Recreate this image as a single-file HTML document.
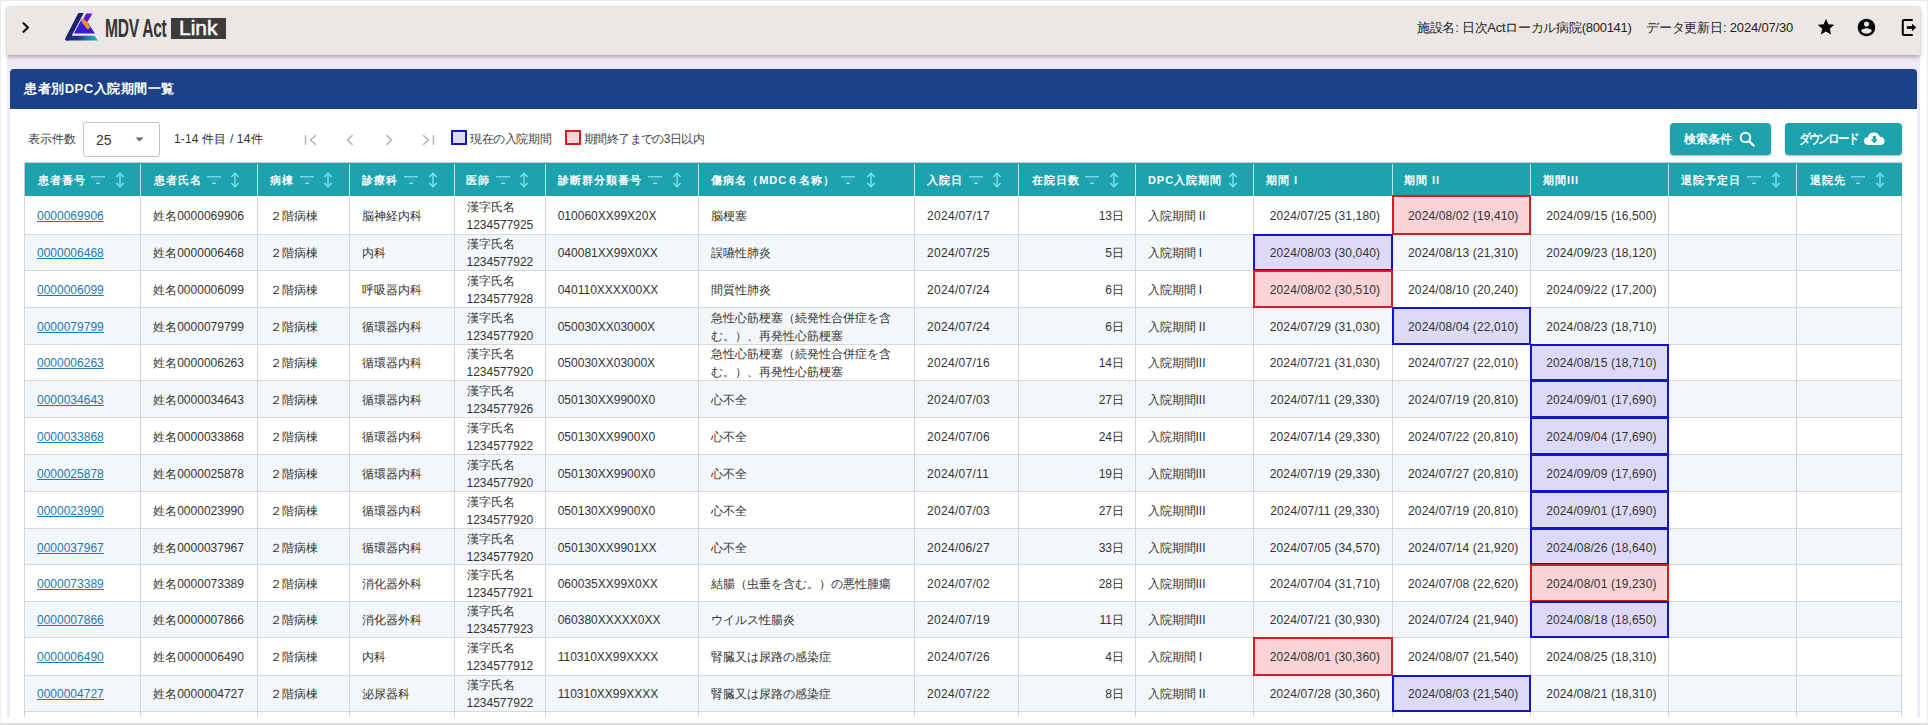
<!DOCTYPE html>
<html lang="ja"><head><meta charset="utf-8"><title>患者別DPC入院期間一覧</title>
<style>
html,body{margin:0;padding:0;}
body{width:1928px;height:725px;position:relative;overflow:hidden;background:#fff;font-family:'Liberation Sans', sans-serif;color:#333;}
.a{position:absolute;}
.t{position:absolute;white-space:nowrap;font-size:12px;line-height:18px;}
.hl{position:absolute;background:#d5d9de;}
.hd{position:absolute;color:#fff;font-weight:bold;font-size:11px;letter-spacing:1px;line-height:18px;white-space:nowrap;}
</style></head><body>

<div class="a" style="left:0;top:0;width:1928px;height:725px;box-sizing:border-box;border:1px solid #ececec;border-bottom:2px solid #dedede;"></div>
<div class="a" style="left:7px;top:6px;width:1913px;height:711px;background:#efeaf6;"></div>
<div class="a" style="left:7px;top:6px;width:1913px;height:49px;background:#ebe7e4;box-shadow:0 2px 4px rgba(0,0,0,0.3);"></div>
<svg class="a" style="left:18px;top:18px" width="16" height="18" viewBox="0 0 16 18"><path d="M5.5 5.2 L10 9.5 L5.5 13.8" fill="none" stroke="#111" stroke-width="2.2" stroke-linecap="round" stroke-linejoin="round"/></svg>
<svg class="a" style="left:60px;top:8px" width="44" height="36" viewBox="0 0 44 36">
<defs><linearGradient id="g1" gradientUnits="userSpaceOnUse" x1="5" y1="0" x2="38" y2="0"><stop offset="0" stop-color="#1d2570"/><stop offset="0.4" stop-color="#23338a"/><stop offset="1" stop-color="#22c3c6"/></linearGradient></defs>
<path d="M18.2 5.6 Q18.6 5 19.3 5 L23.6 5 L11.5 27.8 L34.8 27.8 L37.9 32.4 L6.8 32.4 Q4.6 32.4 5.4 30.6 Z" fill="url(#g1)"/>
<path d="M18.2 5.6 Q18.6 5 19.3 5 L23.6 5 L11.5 27.8 L9 32.4 L6.8 32.4 Q4.6 32.4 5.4 30.6 Z" fill="#1d2570"/>
<path d="M14 25.4 L21.6 11.2 L28.5 15.5 L34.9 25.4 Z" fill="#3c1bd8"/>
<path d="M26.2 5.5 L32.5 5.5 L27 14.5 L22.5 12.2 Z" fill="#6214d0"/>
<path d="M21 12.9 L24.1 10.7 L30.6 19.3 L27.5 21.5 Z" fill="#f0912a"/>
</svg>
<div class="a" style="left:105px;top:13px;font-family:'Liberation Sans', sans-serif;font-weight:bold;font-size:26px;line-height:30px;color:#3a3434;transform:scaleX(0.6);transform-origin:0 0;letter-spacing:-0.5px;">MDV Act</div>
<div class="a" style="left:171px;top:18px;width:55px;height:21px;background:#403b3b;"></div>
<div class="a" style="left:179px;top:15.5px;font-weight:normal;-webkit-text-stroke:0.5px #fff;font-size:21px;line-height:24px;color:#fff;transform:scaleX(1);transform-origin:0 0;">Link</div>
<div class="a" style="left:1417px;top:18px;font-size:13px;letter-spacing:-0.27px;line-height:20px;color:#222;white-space:nowrap;">施設名: 日次Actローカル病院(800141)</div>
<div class="a" style="left:1646px;top:18px;font-size:13px;letter-spacing:-0.18px;line-height:20px;color:#222;white-space:nowrap;">データ更新日: 2024/07/30</div>
<svg class="a" style="left:1816px;top:17px" width="20" height="20" viewBox="0 0 24 24"><path d="M12 17.27L18.18 21l-1.64-7.03L22 9.24l-7.19-.61L12 2 9.19 8.63 2 9.24l5.46 4.73L5.82 21z" fill="#0a0a0a"/></svg>
<svg class="a" style="left:1856px;top:17px" width="21" height="21" viewBox="0 0 24 24"><path fill-rule="evenodd" d="M12 2C6.48 2 2 6.48 2 12s4.48 10 10 10 10-4.48 10-10S17.52 2 12 2zm0 3c1.66 0 3 1.34 3 3s-1.34 3-3 3-3-1.34-3-3 1.34-3 3-3zm0 14.2c-2.5 0-4.71-1.28-6-3.22.03-1.99 4-3.08 6-3.08 1.99 0 5.97 1.09 6 3.08-1.29 1.94-3.5 3.22-6 3.22z" fill="#0a0a0a"/></svg>
<svg class="a" style="left:1900px;top:17px" width="18" height="20" viewBox="0 0 18 20"><path d="M12 3 H4 Q2.8 3 2.8 4.2 V16.8 Q2.8 18 4 18 H12" fill="none" stroke="#0a0a0a" stroke-width="2.1" stroke-linecap="round"/><path d="M6.8 10.5 H12.5" stroke="#0a0a0a" stroke-width="2.8"/><path d="M12 6.8 L16.3 10.5 L12 14.2 Z" fill="#0a0a0a"/></svg>
<div class="a" style="left:10px;top:68.5px;width:1907px;height:40.5px;background:#1d4189;border-radius:4px 4px 0 0;"></div>
<div class="a" style="left:24px;top:78.5px;font-size:13px;letter-spacing:0.55px;line-height:20px;font-weight:bold;color:#fff;white-space:nowrap;">患者別DPC入院期間一覧</div>
<div class="a" style="left:10px;top:109px;width:1907px;height:608px;background:#fff;"></div>
<div class="a" style="left:28px;top:130px;font-size:12px;line-height:18px;color:#444;white-space:nowrap;">表示件数</div>
<div class="a" style="left:83px;top:122px;width:77px;height:35px;box-sizing:border-box;border:1px solid #c4c4c4;border-radius:3px;"></div>
<div class="a" style="left:96px;top:130px;font-size:14px;line-height:20px;color:#333;">25</div>
<svg class="a" style="left:135px;top:137px" width="9" height="5" viewBox="0 0 9 5"><path d="M0.5 0.5 L8.5 0.5 L4.5 4.5 Z" fill="#666"/></svg>
<div class="a" style="left:174px;top:130px;font-size:12px;letter-spacing:0.15px;line-height:18px;color:#333;white-space:nowrap;">1-14 件目 / 14件</div>
<svg class="a" style="left:303px;top:133px" width="16" height="14" viewBox="0 0 16 14"><path d="M2.5 2 V12" stroke="#b8b8b8" stroke-width="1.6"/><path d="M13 2.2 L7.5 7 L13 11.8" fill="none" stroke="#b8b8b8" stroke-width="1.6"/></svg>
<svg class="a" style="left:344px;top:133px" width="12" height="14" viewBox="0 0 12 14"><path d="M8.5 2.2 L3.5 7 L8.5 11.8" fill="none" stroke="#b8b8b8" stroke-width="1.6"/></svg>
<svg class="a" style="left:383px;top:133px" width="12" height="14" viewBox="0 0 12 14"><path d="M3.5 2.2 L8.5 7 L3.5 11.8" fill="none" stroke="#b8b8b8" stroke-width="1.6"/></svg>
<svg class="a" style="left:420px;top:133px" width="16" height="14" viewBox="0 0 16 14"><path d="M3 2.2 L8.5 7 L3 11.8" fill="none" stroke="#b8b8b8" stroke-width="1.6"/><path d="M13.5 2 V12" stroke="#b8b8b8" stroke-width="1.6"/></svg>
<div class="a" style="left:451px;top:130px;width:16px;height:15px;box-sizing:border-box;border:2px solid #1414c8;background:#dcdaf8;"></div>
<div class="a" style="left:470px;top:129.5px;font-size:12px;letter-spacing:-0.4px;line-height:18px;color:#444;white-space:nowrap;">現在の入院期間</div>
<div class="a" style="left:565px;top:130px;width:16px;height:15px;box-sizing:border-box;border:2px solid #d81c24;background:#f9d3d5;"></div>
<div class="a" style="left:584px;top:129.5px;font-size:12px;letter-spacing:-0.6px;line-height:18px;color:#444;white-space:nowrap;">期間終了までの3日以内</div>
<div class="a" style="left:1670px;top:123px;width:101px;height:32px;background:#1ca3ae;border-radius:4px;box-shadow:0 1px 2px rgba(0,0,0,0.3);"></div>
<div class="a" style="left:1684px;top:130px;font-size:12px;line-height:18px;font-weight:bold;color:#fff;white-space:nowrap;">検索条件</div>
<svg class="a" style="left:1739px;top:131px" width="17" height="16" viewBox="0 0 17 16"><circle cx="6.5" cy="6.5" r="4.8" fill="none" stroke="#fff" stroke-width="2"/><path d="M10 10 L14.5 14.5" stroke="#fff" stroke-width="2.4" stroke-linecap="round"/></svg>
<div class="a" style="left:1785px;top:123px;width:117px;height:32px;background:#1ca3ae;border-radius:4px;box-shadow:0 1px 2px rgba(0,0,0,0.3);"></div>
<div class="a" style="left:1799px;top:130px;font-size:12.5px;line-height:18px;font-weight:bold;color:#fff;white-space:nowrap;letter-spacing:-2px;transform:scaleX(0.886);transform-origin:0 0;">ダウンロード</div>
<svg class="a" style="left:1863px;top:131px" width="23" height="16" viewBox="0 0 23 16"><path d="M5.5 14 Q1 14 1 10 Q1 6.5 4.8 6.2 Q5.8 1.5 10.8 1.5 Q15.5 1.5 16.8 5.8 Q21.5 6 21.5 10 Q21.5 14 17.5 14 Z" fill="#fff"/><path d="M9.8 5 H12.8 V8.5 H15 L11.3 12.2 L7.6 8.5 H9.8 Z" fill="#1ca3ae"/></svg>
<div class="a" style="left:24.5px;top:162px;width:1877.0px;height:1px;background:#d0d0d0;"></div>
<div class="a" style="left:24.5px;top:163px;width:1877.0px;height:32.6px;background:#1ca3ae;"></div>
<div class="a" style="left:24.5px;top:234.3px;width:1877.0px;height:36.1px;background:#f3f7fa;"></div>
<div class="a" style="left:24.5px;top:307.5px;width:1877.0px;height:37.0px;background:#f3f7fa;"></div>
<div class="a" style="left:24.5px;top:380.4px;width:1877.0px;height:37.0px;background:#f3f7fa;"></div>
<div class="a" style="left:24.5px;top:454.2px;width:1877.0px;height:36.9px;background:#f3f7fa;"></div>
<div class="a" style="left:24.5px;top:528.6px;width:1877.0px;height:35.7px;background:#f3f7fa;"></div>
<div class="a" style="left:24.5px;top:601.5px;width:1877.0px;height:35.7px;background:#f3f7fa;"></div>
<div class="a" style="left:24.5px;top:675.4px;width:1877.0px;height:35.7px;background:#f3f7fa;"></div>
<div class="hl" style="left:24.5px;top:233.8px;width:1877.0px;height:1px;"></div>
<div class="hl" style="left:24.5px;top:269.9px;width:1877.0px;height:1px;"></div>
<div class="hl" style="left:24.5px;top:307.0px;width:1877.0px;height:1px;"></div>
<div class="hl" style="left:24.5px;top:344.0px;width:1877.0px;height:1px;"></div>
<div class="hl" style="left:24.5px;top:379.9px;width:1877.0px;height:1px;"></div>
<div class="hl" style="left:24.5px;top:416.9px;width:1877.0px;height:1px;"></div>
<div class="hl" style="left:24.5px;top:453.7px;width:1877.0px;height:1px;"></div>
<div class="hl" style="left:24.5px;top:490.6px;width:1877.0px;height:1px;"></div>
<div class="hl" style="left:24.5px;top:528.1px;width:1877.0px;height:1px;"></div>
<div class="hl" style="left:24.5px;top:563.8px;width:1877.0px;height:1px;"></div>
<div class="hl" style="left:24.5px;top:601.0px;width:1877.0px;height:1px;"></div>
<div class="hl" style="left:24.5px;top:636.7px;width:1877.0px;height:1px;"></div>
<div class="hl" style="left:24.5px;top:674.9px;width:1877.0px;height:1px;"></div>
<div class="hl" style="left:24.5px;top:710.6px;width:1877.0px;height:1px;"></div>
<div class="a" style="left:24.0px;top:195.6px;width:1px;height:521px;background:#d3d6db;"></div>
<div class="a" style="left:140.2px;top:163.5px;width:1px;height:32px;background:#bfe6ea;"></div>
<div class="a" style="left:140.2px;top:195.6px;width:1px;height:521px;background:#d3d6db;"></div>
<div class="a" style="left:256.8px;top:163.5px;width:1px;height:32px;background:#bfe6ea;"></div>
<div class="a" style="left:256.8px;top:195.6px;width:1px;height:521px;background:#d3d6db;"></div>
<div class="a" style="left:349.2px;top:163.5px;width:1px;height:32px;background:#bfe6ea;"></div>
<div class="a" style="left:349.2px;top:195.6px;width:1px;height:521px;background:#d3d6db;"></div>
<div class="a" style="left:453.5px;top:163.5px;width:1px;height:32px;background:#bfe6ea;"></div>
<div class="a" style="left:453.5px;top:195.6px;width:1px;height:521px;background:#d3d6db;"></div>
<div class="a" style="left:544.7px;top:163.5px;width:1px;height:32px;background:#bfe6ea;"></div>
<div class="a" style="left:544.7px;top:195.6px;width:1px;height:521px;background:#d3d6db;"></div>
<div class="a" style="left:698.2px;top:163.5px;width:1px;height:32px;background:#bfe6ea;"></div>
<div class="a" style="left:698.2px;top:195.6px;width:1px;height:521px;background:#d3d6db;"></div>
<div class="a" style="left:914.0px;top:163.5px;width:1px;height:32px;background:#bfe6ea;"></div>
<div class="a" style="left:914.0px;top:195.6px;width:1px;height:521px;background:#d3d6db;"></div>
<div class="a" style="left:1018.2px;top:163.5px;width:1px;height:32px;background:#bfe6ea;"></div>
<div class="a" style="left:1018.2px;top:195.6px;width:1px;height:521px;background:#d3d6db;"></div>
<div class="a" style="left:1134.5px;top:163.5px;width:1px;height:32px;background:#bfe6ea;"></div>
<div class="a" style="left:1134.5px;top:195.6px;width:1px;height:521px;background:#d3d6db;"></div>
<div class="a" style="left:1252.9px;top:163.5px;width:1px;height:32px;background:#bfe6ea;"></div>
<div class="a" style="left:1252.9px;top:195.6px;width:1px;height:521px;background:#d3d6db;"></div>
<div class="a" style="left:1392.0px;top:163.5px;width:1px;height:32px;background:#bfe6ea;"></div>
<div class="a" style="left:1392.0px;top:195.6px;width:1px;height:521px;background:#d3d6db;"></div>
<div class="a" style="left:1529.5px;top:163.5px;width:1px;height:32px;background:#bfe6ea;"></div>
<div class="a" style="left:1529.5px;top:195.6px;width:1px;height:521px;background:#d3d6db;"></div>
<div class="a" style="left:1668.3px;top:163.5px;width:1px;height:32px;background:#bfe6ea;"></div>
<div class="a" style="left:1668.3px;top:195.6px;width:1px;height:521px;background:#d3d6db;"></div>
<div class="a" style="left:1796.1px;top:163.5px;width:1px;height:32px;background:#bfe6ea;"></div>
<div class="a" style="left:1796.1px;top:195.6px;width:1px;height:521px;background:#d3d6db;"></div>
<div class="a" style="left:1901.0px;top:195.6px;width:1px;height:521px;background:#d3d6db;"></div>
<div class="a" style="left:24.0px;top:163px;width:1px;height:33px;background:#c9c9c9;"></div>
<div class="hd" style="left:37.5px;top:170.5px;">患者番号</div>
<svg class="a" style="left:91.3px;top:175px" width="14" height="10" viewBox="0 0 14 10"><path d="M0 1.8 H14" stroke="#7fe3ea" stroke-width="1.3"/><path d="M2.5 5 H11.5" stroke="#34b0b9" stroke-width="1.2"/><path d="M5 8.3 H9" stroke="#7fe3ea" stroke-width="1.5"/></svg>
<svg class="a" style="left:114.6px;top:172px" width="10" height="16" viewBox="0 0 10 16"><path d="M5 1.3 V14.7" stroke="#7fe3ea" stroke-width="1.4"/><path d="M1.3 5 L5 1.3 L8.7 5" fill="none" stroke="#7fe3ea" stroke-width="1.4"/><path d="M1.3 11 L5 14.7 L8.7 11" fill="none" stroke="#7fe3ea" stroke-width="1.4"/></svg>
<div class="hd" style="left:153.5px;top:170.5px;">患者氏名</div>
<svg class="a" style="left:206.5px;top:175px" width="14" height="10" viewBox="0 0 14 10"><path d="M0 1.8 H14" stroke="#7fe3ea" stroke-width="1.3"/><path d="M2.5 5 H11.5" stroke="#34b0b9" stroke-width="1.2"/><path d="M5 8.3 H9" stroke="#7fe3ea" stroke-width="1.5"/></svg>
<svg class="a" style="left:230.0px;top:172px" width="10" height="16" viewBox="0 0 10 16"><path d="M5 1.3 V14.7" stroke="#7fe3ea" stroke-width="1.4"/><path d="M1.3 5 L5 1.3 L8.7 5" fill="none" stroke="#7fe3ea" stroke-width="1.4"/><path d="M1.3 11 L5 14.7 L8.7 11" fill="none" stroke="#7fe3ea" stroke-width="1.4"/></svg>
<div class="hd" style="left:270.1px;top:170.5px;">病棟</div>
<svg class="a" style="left:299.8px;top:175px" width="14" height="10" viewBox="0 0 14 10"><path d="M0 1.8 H14" stroke="#7fe3ea" stroke-width="1.3"/><path d="M2.5 5 H11.5" stroke="#34b0b9" stroke-width="1.2"/><path d="M5 8.3 H9" stroke="#7fe3ea" stroke-width="1.5"/></svg>
<svg class="a" style="left:323.2px;top:172px" width="10" height="16" viewBox="0 0 10 16"><path d="M5 1.3 V14.7" stroke="#7fe3ea" stroke-width="1.4"/><path d="M1.3 5 L5 1.3 L8.7 5" fill="none" stroke="#7fe3ea" stroke-width="1.4"/><path d="M1.3 11 L5 14.7 L8.7 11" fill="none" stroke="#7fe3ea" stroke-width="1.4"/></svg>
<div class="hd" style="left:361.7px;top:170.5px;">診療科</div>
<svg class="a" style="left:403.5px;top:175px" width="14" height="10" viewBox="0 0 14 10"><path d="M0 1.8 H14" stroke="#7fe3ea" stroke-width="1.3"/><path d="M2.5 5 H11.5" stroke="#34b0b9" stroke-width="1.2"/><path d="M5 8.3 H9" stroke="#7fe3ea" stroke-width="1.5"/></svg>
<svg class="a" style="left:427.7px;top:172px" width="10" height="16" viewBox="0 0 10 16"><path d="M5 1.3 V14.7" stroke="#7fe3ea" stroke-width="1.4"/><path d="M1.3 5 L5 1.3 L8.7 5" fill="none" stroke="#7fe3ea" stroke-width="1.4"/><path d="M1.3 11 L5 14.7 L8.7 11" fill="none" stroke="#7fe3ea" stroke-width="1.4"/></svg>
<div class="hd" style="left:466.2px;top:170.5px;">医師</div>
<svg class="a" style="left:496.0px;top:175px" width="14" height="10" viewBox="0 0 14 10"><path d="M0 1.8 H14" stroke="#7fe3ea" stroke-width="1.3"/><path d="M2.5 5 H11.5" stroke="#34b0b9" stroke-width="1.2"/><path d="M5 8.3 H9" stroke="#7fe3ea" stroke-width="1.5"/></svg>
<svg class="a" style="left:519.3px;top:172px" width="10" height="16" viewBox="0 0 10 16"><path d="M5 1.3 V14.7" stroke="#7fe3ea" stroke-width="1.4"/><path d="M1.3 5 L5 1.3 L8.7 5" fill="none" stroke="#7fe3ea" stroke-width="1.4"/><path d="M1.3 11 L5 14.7 L8.7 11" fill="none" stroke="#7fe3ea" stroke-width="1.4"/></svg>
<div class="hd" style="left:557.6px;top:170.5px;">診断群分類番号</div>
<svg class="a" style="left:647.9px;top:175px" width="14" height="10" viewBox="0 0 14 10"><path d="M0 1.8 H14" stroke="#7fe3ea" stroke-width="1.3"/><path d="M2.5 5 H11.5" stroke="#34b0b9" stroke-width="1.2"/><path d="M5 8.3 H9" stroke="#7fe3ea" stroke-width="1.5"/></svg>
<svg class="a" style="left:671.7px;top:172px" width="10" height="16" viewBox="0 0 10 16"><path d="M5 1.3 V14.7" stroke="#7fe3ea" stroke-width="1.4"/><path d="M1.3 5 L5 1.3 L8.7 5" fill="none" stroke="#7fe3ea" stroke-width="1.4"/><path d="M1.3 11 L5 14.7 L8.7 11" fill="none" stroke="#7fe3ea" stroke-width="1.4"/></svg>
<div class="hd" style="left:711.2px;top:170.5px;">傷病名（MDC６名称）</div>
<svg class="a" style="left:840.8px;top:175px" width="14" height="10" viewBox="0 0 14 10"><path d="M0 1.8 H14" stroke="#7fe3ea" stroke-width="1.3"/><path d="M2.5 5 H11.5" stroke="#34b0b9" stroke-width="1.2"/><path d="M5 8.3 H9" stroke="#7fe3ea" stroke-width="1.5"/></svg>
<svg class="a" style="left:865.7px;top:172px" width="10" height="16" viewBox="0 0 10 16"><path d="M5 1.3 V14.7" stroke="#7fe3ea" stroke-width="1.4"/><path d="M1.3 5 L5 1.3 L8.7 5" fill="none" stroke="#7fe3ea" stroke-width="1.4"/><path d="M1.3 11 L5 14.7 L8.7 11" fill="none" stroke="#7fe3ea" stroke-width="1.4"/></svg>
<div class="hd" style="left:927.0px;top:170.5px;">入院日</div>
<svg class="a" style="left:968.5px;top:175px" width="14" height="10" viewBox="0 0 14 10"><path d="M0 1.8 H14" stroke="#7fe3ea" stroke-width="1.3"/><path d="M2.5 5 H11.5" stroke="#34b0b9" stroke-width="1.2"/><path d="M5 8.3 H9" stroke="#7fe3ea" stroke-width="1.5"/></svg>
<svg class="a" style="left:992.3px;top:172px" width="10" height="16" viewBox="0 0 10 16"><path d="M5 1.3 V14.7" stroke="#7fe3ea" stroke-width="1.4"/><path d="M1.3 5 L5 1.3 L8.7 5" fill="none" stroke="#7fe3ea" stroke-width="1.4"/><path d="M1.3 11 L5 14.7 L8.7 11" fill="none" stroke="#7fe3ea" stroke-width="1.4"/></svg>
<div class="hd" style="left:1031.7px;top:170.5px;">在院日数</div>
<svg class="a" style="left:1084.6px;top:175px" width="14" height="10" viewBox="0 0 14 10"><path d="M0 1.8 H14" stroke="#7fe3ea" stroke-width="1.3"/><path d="M2.5 5 H11.5" stroke="#34b0b9" stroke-width="1.2"/><path d="M5 8.3 H9" stroke="#7fe3ea" stroke-width="1.5"/></svg>
<svg class="a" style="left:1108.5px;top:172px" width="10" height="16" viewBox="0 0 10 16"><path d="M5 1.3 V14.7" stroke="#7fe3ea" stroke-width="1.4"/><path d="M1.3 5 L5 1.3 L8.7 5" fill="none" stroke="#7fe3ea" stroke-width="1.4"/><path d="M1.3 11 L5 14.7 L8.7 11" fill="none" stroke="#7fe3ea" stroke-width="1.4"/></svg>
<div class="hd" style="left:1147.9px;top:170.5px;">DPC入院期間</div>
<svg class="a" style="left:1227.8px;top:172px" width="10" height="16" viewBox="0 0 10 16"><path d="M5 1.3 V14.7" stroke="#7fe3ea" stroke-width="1.4"/><path d="M1.3 5 L5 1.3 L8.7 5" fill="none" stroke="#7fe3ea" stroke-width="1.4"/><path d="M1.3 11 L5 14.7 L8.7 11" fill="none" stroke="#7fe3ea" stroke-width="1.4"/></svg>
<div class="hd" style="left:1266.0px;top:170.5px;">期間 I</div>
<div class="hd" style="left:1403.9px;top:170.5px;">期間 II</div>
<div class="hd" style="left:1542.9px;top:170.5px;">期間III</div>
<div class="hd" style="left:1681.2px;top:170.5px;">退院予定日</div>
<svg class="a" style="left:1747.0px;top:175px" width="14" height="10" viewBox="0 0 14 10"><path d="M0 1.8 H14" stroke="#7fe3ea" stroke-width="1.3"/><path d="M2.5 5 H11.5" stroke="#34b0b9" stroke-width="1.2"/><path d="M5 8.3 H9" stroke="#7fe3ea" stroke-width="1.5"/></svg>
<svg class="a" style="left:1770.9px;top:172px" width="10" height="16" viewBox="0 0 10 16"><path d="M5 1.3 V14.7" stroke="#7fe3ea" stroke-width="1.4"/><path d="M1.3 5 L5 1.3 L8.7 5" fill="none" stroke="#7fe3ea" stroke-width="1.4"/><path d="M1.3 11 L5 14.7 L8.7 11" fill="none" stroke="#7fe3ea" stroke-width="1.4"/></svg>
<div class="hd" style="left:1810.0px;top:170.5px;">退院先</div>
<svg class="a" style="left:1851.0px;top:175px" width="14" height="10" viewBox="0 0 14 10"><path d="M0 1.8 H14" stroke="#7fe3ea" stroke-width="1.3"/><path d="M2.5 5 H11.5" stroke="#34b0b9" stroke-width="1.2"/><path d="M5 8.3 H9" stroke="#7fe3ea" stroke-width="1.5"/></svg>
<svg class="a" style="left:1874.9px;top:172px" width="10" height="16" viewBox="0 0 10 16"><path d="M5 1.3 V14.7" stroke="#7fe3ea" stroke-width="1.4"/><path d="M1.3 5 L5 1.3 L8.7 5" fill="none" stroke="#7fe3ea" stroke-width="1.4"/><path d="M1.3 11 L5 14.7 L8.7 11" fill="none" stroke="#7fe3ea" stroke-width="1.4"/></svg>
<div class="t" style="left:37.0px;top:206.9px;color:#2179b5;text-decoration:underline;">0000069906</div>
<div class="t" style="left:153.2px;top:206.9px;">姓名0000069906</div>
<div class="t" style="left:269.8px;top:206.9px;">２階病棟</div>
<div class="t" style="left:362.2px;top:206.9px;">脳神経内科</div>
<div class="t" style="left:466.5px;top:197.9px;">漢字氏名<br>1234577925</div>
<div class="t" style="left:557.7px;top:206.9px;">010060XX99X20X</div>
<div class="t" style="left:711.2px;top:206.9px;">脳梗塞</div>
<div class="t" style="left:927.0px;top:206.9px;letter-spacing:0.3px;">2024/07/17</div>
<div class="t" style="left:1018.7px;top:206.9px;width:105.3px;text-align:right;">13日</div>
<div class="t" style="left:1147.5px;top:206.9px;">入院期間 II</div>
<div class="t" style="left:1255.4px;top:206.9px;width:139.1px;text-align:center;letter-spacing:0.12px;">2024/07/25 (31,180)</div>
<div class="a" style="left:1392.0px;top:195.1px;width:138.5px;height:39.7px;box-sizing:border-box;border:2px solid #d81c24;background:#f9d3d5;"></div>
<div class="t" style="left:1394.5px;top:206.9px;width:137.5px;text-align:center;letter-spacing:0.12px;">2024/08/02 (19,410)</div>
<div class="t" style="left:1532.0px;top:206.9px;width:138.8px;text-align:center;letter-spacing:0.12px;">2024/09/15 (16,500)</div>
<div class="t" style="left:37.0px;top:244.3px;color:#2179b5;text-decoration:underline;">0000006468</div>
<div class="t" style="left:153.2px;top:244.3px;">姓名0000006468</div>
<div class="t" style="left:269.8px;top:244.3px;">２階病棟</div>
<div class="t" style="left:362.2px;top:244.3px;">内科</div>
<div class="t" style="left:466.5px;top:235.3px;">漢字氏名<br>1234577922</div>
<div class="t" style="left:557.7px;top:244.3px;">040081XX99X0XX</div>
<div class="t" style="left:711.2px;top:244.3px;">誤嚥性肺炎</div>
<div class="t" style="left:927.0px;top:244.3px;letter-spacing:0.3px;">2024/07/25</div>
<div class="t" style="left:1018.7px;top:244.3px;width:105.3px;text-align:right;">5日</div>
<div class="t" style="left:1147.5px;top:244.3px;">入院期間 I</div>
<div class="a" style="left:1252.9px;top:233.8px;width:140.1px;height:37.1px;box-sizing:border-box;border:2px solid #1414c8;background:#dcdaf8;"></div>
<div class="t" style="left:1255.4px;top:244.3px;width:139.1px;text-align:center;letter-spacing:0.12px;">2024/08/03 (30,040)</div>
<div class="t" style="left:1394.5px;top:244.3px;width:137.5px;text-align:center;letter-spacing:0.12px;">2024/08/13 (21,310)</div>
<div class="t" style="left:1532.0px;top:244.3px;width:138.8px;text-align:center;letter-spacing:0.12px;">2024/09/23 (18,120)</div>
<div class="t" style="left:37.0px;top:280.9px;color:#2179b5;text-decoration:underline;">0000006099</div>
<div class="t" style="left:153.2px;top:280.9px;">姓名0000006099</div>
<div class="t" style="left:269.8px;top:280.9px;">２階病棟</div>
<div class="t" style="left:362.2px;top:280.9px;">呼吸器内科</div>
<div class="t" style="left:466.5px;top:271.9px;">漢字氏名<br>1234577928</div>
<div class="t" style="left:557.7px;top:280.9px;">040110XXXX00XX</div>
<div class="t" style="left:711.2px;top:280.9px;">間質性肺炎</div>
<div class="t" style="left:927.0px;top:280.9px;letter-spacing:0.3px;">2024/07/24</div>
<div class="t" style="left:1018.7px;top:280.9px;width:105.3px;text-align:right;">6日</div>
<div class="t" style="left:1147.5px;top:280.9px;">入院期間 I</div>
<div class="a" style="left:1252.9px;top:269.9px;width:140.1px;height:38.1px;box-sizing:border-box;border:2px solid #d81c24;background:#f9d3d5;"></div>
<div class="t" style="left:1255.4px;top:280.9px;width:139.1px;text-align:center;letter-spacing:0.12px;">2024/08/02 (30,510)</div>
<div class="t" style="left:1394.5px;top:280.9px;width:137.5px;text-align:center;letter-spacing:0.12px;">2024/08/10 (20,240)</div>
<div class="t" style="left:1532.0px;top:280.9px;width:138.8px;text-align:center;letter-spacing:0.12px;">2024/09/22 (17,200)</div>
<div class="t" style="left:37.0px;top:318.0px;color:#2179b5;text-decoration:underline;">0000079799</div>
<div class="t" style="left:153.2px;top:318.0px;">姓名0000079799</div>
<div class="t" style="left:269.8px;top:318.0px;">２階病棟</div>
<div class="t" style="left:362.2px;top:318.0px;">循環器内科</div>
<div class="t" style="left:466.5px;top:309.0px;">漢字氏名<br>1234577920</div>
<div class="t" style="left:557.7px;top:318.0px;">050030XX03000X</div>
<div class="t" style="left:711.2px;top:309.0px;">急性心筋梗塞（続発性合併症を含<br>む。）、再発性心筋梗塞</div>
<div class="t" style="left:927.0px;top:318.0px;letter-spacing:0.3px;">2024/07/24</div>
<div class="t" style="left:1018.7px;top:318.0px;width:105.3px;text-align:right;">6日</div>
<div class="t" style="left:1147.5px;top:318.0px;">入院期間 II</div>
<div class="t" style="left:1255.4px;top:318.0px;width:139.1px;text-align:center;letter-spacing:0.12px;">2024/07/29 (31,030)</div>
<div class="a" style="left:1392.0px;top:307.0px;width:138.5px;height:38.0px;box-sizing:border-box;border:2px solid #1414c8;background:#dcdaf8;"></div>
<div class="t" style="left:1394.5px;top:318.0px;width:137.5px;text-align:center;letter-spacing:0.12px;">2024/08/04 (22,010)</div>
<div class="t" style="left:1532.0px;top:318.0px;width:138.8px;text-align:center;letter-spacing:0.12px;">2024/08/23 (18,710)</div>
<div class="t" style="left:37.0px;top:354.4px;color:#2179b5;text-decoration:underline;">0000006263</div>
<div class="t" style="left:153.2px;top:354.4px;">姓名0000006263</div>
<div class="t" style="left:269.8px;top:354.4px;">２階病棟</div>
<div class="t" style="left:362.2px;top:354.4px;">循環器内科</div>
<div class="t" style="left:466.5px;top:345.4px;">漢字氏名<br>1234577920</div>
<div class="t" style="left:557.7px;top:354.4px;">050030XX03000X</div>
<div class="t" style="left:711.2px;top:345.4px;">急性心筋梗塞（続発性合併症を含<br>む。）、再発性心筋梗塞</div>
<div class="t" style="left:927.0px;top:354.4px;letter-spacing:0.3px;">2024/07/16</div>
<div class="t" style="left:1018.7px;top:354.4px;width:105.3px;text-align:right;">14日</div>
<div class="t" style="left:1147.5px;top:354.4px;">入院期間III</div>
<div class="t" style="left:1255.4px;top:354.4px;width:139.1px;text-align:center;letter-spacing:0.12px;">2024/07/21 (31,030)</div>
<div class="t" style="left:1394.5px;top:354.4px;width:137.5px;text-align:center;letter-spacing:0.12px;">2024/07/27 (22,010)</div>
<div class="a" style="left:1529.5px;top:344.0px;width:139.8px;height:36.9px;box-sizing:border-box;border:2px solid #1414c8;background:#dcdaf8;"></div>
<div class="t" style="left:1532.0px;top:354.4px;width:138.8px;text-align:center;letter-spacing:0.12px;">2024/08/15 (18,710)</div>
<div class="t" style="left:37.0px;top:390.9px;color:#2179b5;text-decoration:underline;">0000034643</div>
<div class="t" style="left:153.2px;top:390.9px;">姓名0000034643</div>
<div class="t" style="left:269.8px;top:390.9px;">２階病棟</div>
<div class="t" style="left:362.2px;top:390.9px;">循環器内科</div>
<div class="t" style="left:466.5px;top:381.9px;">漢字氏名<br>1234577926</div>
<div class="t" style="left:557.7px;top:390.9px;">050130XX9900X0</div>
<div class="t" style="left:711.2px;top:390.9px;">心不全</div>
<div class="t" style="left:927.0px;top:390.9px;letter-spacing:0.3px;">2024/07/03</div>
<div class="t" style="left:1018.7px;top:390.9px;width:105.3px;text-align:right;">27日</div>
<div class="t" style="left:1147.5px;top:390.9px;">入院期間III</div>
<div class="t" style="left:1255.4px;top:390.9px;width:139.1px;text-align:center;letter-spacing:0.12px;">2024/07/11 (29,330)</div>
<div class="t" style="left:1394.5px;top:390.9px;width:137.5px;text-align:center;letter-spacing:0.12px;">2024/07/19 (20,810)</div>
<div class="a" style="left:1529.5px;top:379.9px;width:139.8px;height:38.0px;box-sizing:border-box;border:2px solid #1414c8;background:#dcdaf8;"></div>
<div class="t" style="left:1532.0px;top:390.9px;width:138.8px;text-align:center;letter-spacing:0.12px;">2024/09/01 (17,690)</div>
<div class="t" style="left:37.0px;top:427.8px;color:#2179b5;text-decoration:underline;">0000033868</div>
<div class="t" style="left:153.2px;top:427.8px;">姓名0000033868</div>
<div class="t" style="left:269.8px;top:427.8px;">２階病棟</div>
<div class="t" style="left:362.2px;top:427.8px;">循環器内科</div>
<div class="t" style="left:466.5px;top:418.8px;">漢字氏名<br>1234577922</div>
<div class="t" style="left:557.7px;top:427.8px;">050130XX9900X0</div>
<div class="t" style="left:711.2px;top:427.8px;">心不全</div>
<div class="t" style="left:927.0px;top:427.8px;letter-spacing:0.3px;">2024/07/06</div>
<div class="t" style="left:1018.7px;top:427.8px;width:105.3px;text-align:right;">24日</div>
<div class="t" style="left:1147.5px;top:427.8px;">入院期間III</div>
<div class="t" style="left:1255.4px;top:427.8px;width:139.1px;text-align:center;letter-spacing:0.12px;">2024/07/14 (29,330)</div>
<div class="t" style="left:1394.5px;top:427.8px;width:137.5px;text-align:center;letter-spacing:0.12px;">2024/07/22 (20,810)</div>
<div class="a" style="left:1529.5px;top:416.9px;width:139.8px;height:37.8px;box-sizing:border-box;border:2px solid #1414c8;background:#dcdaf8;"></div>
<div class="t" style="left:1532.0px;top:427.8px;width:138.8px;text-align:center;letter-spacing:0.12px;">2024/09/04 (17,690)</div>
<div class="t" style="left:37.0px;top:464.6px;color:#2179b5;text-decoration:underline;">0000025878</div>
<div class="t" style="left:153.2px;top:464.6px;">姓名0000025878</div>
<div class="t" style="left:269.8px;top:464.6px;">２階病棟</div>
<div class="t" style="left:362.2px;top:464.6px;">循環器内科</div>
<div class="t" style="left:466.5px;top:455.6px;">漢字氏名<br>1234577920</div>
<div class="t" style="left:557.7px;top:464.6px;">050130XX9900X0</div>
<div class="t" style="left:711.2px;top:464.6px;">心不全</div>
<div class="t" style="left:927.0px;top:464.6px;letter-spacing:0.3px;">2024/07/11</div>
<div class="t" style="left:1018.7px;top:464.6px;width:105.3px;text-align:right;">19日</div>
<div class="t" style="left:1147.5px;top:464.6px;">入院期間III</div>
<div class="t" style="left:1255.4px;top:464.6px;width:139.1px;text-align:center;letter-spacing:0.12px;">2024/07/19 (29,330)</div>
<div class="t" style="left:1394.5px;top:464.6px;width:137.5px;text-align:center;letter-spacing:0.12px;">2024/07/27 (20,810)</div>
<div class="a" style="left:1529.5px;top:453.7px;width:139.8px;height:37.9px;box-sizing:border-box;border:2px solid #1414c8;background:#dcdaf8;"></div>
<div class="t" style="left:1532.0px;top:464.6px;width:138.8px;text-align:center;letter-spacing:0.12px;">2024/09/09 (17,690)</div>
<div class="t" style="left:37.0px;top:501.9px;color:#2179b5;text-decoration:underline;">0000023990</div>
<div class="t" style="left:153.2px;top:501.9px;">姓名0000023990</div>
<div class="t" style="left:269.8px;top:501.9px;">２階病棟</div>
<div class="t" style="left:362.2px;top:501.9px;">循環器内科</div>
<div class="t" style="left:466.5px;top:492.9px;">漢字氏名<br>1234577920</div>
<div class="t" style="left:557.7px;top:501.9px;">050130XX9900X0</div>
<div class="t" style="left:711.2px;top:501.9px;">心不全</div>
<div class="t" style="left:927.0px;top:501.9px;letter-spacing:0.3px;">2024/07/03</div>
<div class="t" style="left:1018.7px;top:501.9px;width:105.3px;text-align:right;">27日</div>
<div class="t" style="left:1147.5px;top:501.9px;">入院期間III</div>
<div class="t" style="left:1255.4px;top:501.9px;width:139.1px;text-align:center;letter-spacing:0.12px;">2024/07/11 (29,330)</div>
<div class="t" style="left:1394.5px;top:501.9px;width:137.5px;text-align:center;letter-spacing:0.12px;">2024/07/19 (20,810)</div>
<div class="a" style="left:1529.5px;top:490.6px;width:139.8px;height:38.5px;box-sizing:border-box;border:2px solid #1414c8;background:#dcdaf8;"></div>
<div class="t" style="left:1532.0px;top:501.9px;width:138.8px;text-align:center;letter-spacing:0.12px;">2024/09/01 (17,690)</div>
<div class="t" style="left:37.0px;top:538.5px;color:#2179b5;text-decoration:underline;">0000037967</div>
<div class="t" style="left:153.2px;top:538.5px;">姓名0000037967</div>
<div class="t" style="left:269.8px;top:538.5px;">２階病棟</div>
<div class="t" style="left:362.2px;top:538.5px;">循環器内科</div>
<div class="t" style="left:466.5px;top:529.5px;">漢字氏名<br>1234577920</div>
<div class="t" style="left:557.7px;top:538.5px;">050130XX9901XX</div>
<div class="t" style="left:711.2px;top:538.5px;">心不全</div>
<div class="t" style="left:927.0px;top:538.5px;letter-spacing:0.3px;">2024/06/27</div>
<div class="t" style="left:1018.7px;top:538.5px;width:105.3px;text-align:right;">33日</div>
<div class="t" style="left:1147.5px;top:538.5px;">入院期間III</div>
<div class="t" style="left:1255.4px;top:538.5px;width:139.1px;text-align:center;letter-spacing:0.12px;">2024/07/05 (34,570)</div>
<div class="t" style="left:1394.5px;top:538.5px;width:137.5px;text-align:center;letter-spacing:0.12px;">2024/07/14 (21,920)</div>
<div class="a" style="left:1529.5px;top:528.1px;width:139.8px;height:36.7px;box-sizing:border-box;border:2px solid #1414c8;background:#dcdaf8;"></div>
<div class="t" style="left:1532.0px;top:538.5px;width:138.8px;text-align:center;letter-spacing:0.12px;">2024/08/26 (18,640)</div>
<div class="t" style="left:37.0px;top:574.9px;color:#2179b5;text-decoration:underline;">0000073389</div>
<div class="t" style="left:153.2px;top:574.9px;">姓名0000073389</div>
<div class="t" style="left:269.8px;top:574.9px;">２階病棟</div>
<div class="t" style="left:362.2px;top:574.9px;">消化器外科</div>
<div class="t" style="left:466.5px;top:565.9px;">漢字氏名<br>1234577921</div>
<div class="t" style="left:557.7px;top:574.9px;">060035XX99X0XX</div>
<div class="t" style="left:711.2px;top:574.9px;">結腸（虫垂を含む。）の悪性腫瘍</div>
<div class="t" style="left:927.0px;top:574.9px;letter-spacing:0.3px;">2024/07/02</div>
<div class="t" style="left:1018.7px;top:574.9px;width:105.3px;text-align:right;">28日</div>
<div class="t" style="left:1147.5px;top:574.9px;">入院期間III</div>
<div class="t" style="left:1255.4px;top:574.9px;width:139.1px;text-align:center;letter-spacing:0.12px;">2024/07/04 (31,710)</div>
<div class="t" style="left:1394.5px;top:574.9px;width:137.5px;text-align:center;letter-spacing:0.12px;">2024/07/08 (22,620)</div>
<div class="a" style="left:1529.5px;top:563.8px;width:139.8px;height:38.2px;box-sizing:border-box;border:2px solid #d81c24;background:#f9d3d5;"></div>
<div class="t" style="left:1532.0px;top:574.9px;width:138.8px;text-align:center;letter-spacing:0.12px;">2024/08/01 (19,230)</div>
<div class="t" style="left:37.0px;top:611.4px;color:#2179b5;text-decoration:underline;">0000007866</div>
<div class="t" style="left:153.2px;top:611.4px;">姓名0000007866</div>
<div class="t" style="left:269.8px;top:611.4px;">２階病棟</div>
<div class="t" style="left:362.2px;top:611.4px;">消化器外科</div>
<div class="t" style="left:466.5px;top:602.4px;">漢字氏名<br>1234577923</div>
<div class="t" style="left:557.7px;top:611.4px;">060380XXXXX0XX</div>
<div class="t" style="left:711.2px;top:611.4px;">ウイルス性腸炎</div>
<div class="t" style="left:927.0px;top:611.4px;letter-spacing:0.3px;">2024/07/19</div>
<div class="t" style="left:1018.7px;top:611.4px;width:105.3px;text-align:right;">11日</div>
<div class="t" style="left:1147.5px;top:611.4px;">入院期間III</div>
<div class="t" style="left:1255.4px;top:611.4px;width:139.1px;text-align:center;letter-spacing:0.12px;">2024/07/21 (30,930)</div>
<div class="t" style="left:1394.5px;top:611.4px;width:137.5px;text-align:center;letter-spacing:0.12px;">2024/07/24 (21,940)</div>
<div class="a" style="left:1529.5px;top:601.0px;width:139.8px;height:36.7px;box-sizing:border-box;border:2px solid #1414c8;background:#dcdaf8;"></div>
<div class="t" style="left:1532.0px;top:611.4px;width:138.8px;text-align:center;letter-spacing:0.12px;">2024/08/18 (18,650)</div>
<div class="t" style="left:37.0px;top:648.3px;color:#2179b5;text-decoration:underline;">0000006490</div>
<div class="t" style="left:153.2px;top:648.3px;">姓名0000006490</div>
<div class="t" style="left:269.8px;top:648.3px;">２階病棟</div>
<div class="t" style="left:362.2px;top:648.3px;">内科</div>
<div class="t" style="left:466.5px;top:639.3px;">漢字氏名<br>1234577912</div>
<div class="t" style="left:557.7px;top:648.3px;">110310XX99XXXX</div>
<div class="t" style="left:711.2px;top:648.3px;">腎臓又は尿路の感染症</div>
<div class="t" style="left:927.0px;top:648.3px;letter-spacing:0.3px;">2024/07/26</div>
<div class="t" style="left:1018.7px;top:648.3px;width:105.3px;text-align:right;">4日</div>
<div class="t" style="left:1147.5px;top:648.3px;">入院期間 I</div>
<div class="a" style="left:1252.9px;top:636.7px;width:140.1px;height:39.2px;box-sizing:border-box;border:2px solid #d81c24;background:#f9d3d5;"></div>
<div class="t" style="left:1255.4px;top:648.3px;width:139.1px;text-align:center;letter-spacing:0.12px;">2024/08/01 (30,360)</div>
<div class="t" style="left:1394.5px;top:648.3px;width:137.5px;text-align:center;letter-spacing:0.12px;">2024/08/07 (21,540)</div>
<div class="t" style="left:1532.0px;top:648.3px;width:138.8px;text-align:center;letter-spacing:0.12px;">2024/08/25 (18,310)</div>
<div class="t" style="left:37.0px;top:685.2px;color:#2179b5;text-decoration:underline;">0000004727</div>
<div class="t" style="left:153.2px;top:685.2px;">姓名0000004727</div>
<div class="t" style="left:269.8px;top:685.2px;">２階病棟</div>
<div class="t" style="left:362.2px;top:685.2px;">泌尿器科</div>
<div class="t" style="left:466.5px;top:676.2px;">漢字氏名<br>1234577922</div>
<div class="t" style="left:557.7px;top:685.2px;">110310XX99XXXX</div>
<div class="t" style="left:711.2px;top:685.2px;">腎臓又は尿路の感染症</div>
<div class="t" style="left:927.0px;top:685.2px;letter-spacing:0.3px;">2024/07/22</div>
<div class="t" style="left:1018.7px;top:685.2px;width:105.3px;text-align:right;">8日</div>
<div class="t" style="left:1147.5px;top:685.2px;">入院期間 II</div>
<div class="t" style="left:1255.4px;top:685.2px;width:139.1px;text-align:center;letter-spacing:0.12px;">2024/07/28 (30,360)</div>
<div class="a" style="left:1392.0px;top:674.9px;width:138.5px;height:36.7px;box-sizing:border-box;border:2px solid #1414c8;background:#dcdaf8;"></div>
<div class="t" style="left:1394.5px;top:685.2px;width:137.5px;text-align:center;letter-spacing:0.12px;">2024/08/03 (21,540)</div>
<div class="t" style="left:1532.0px;top:685.2px;width:138.8px;text-align:center;letter-spacing:0.12px;">2024/08/21 (18,310)</div>
</body></html>
